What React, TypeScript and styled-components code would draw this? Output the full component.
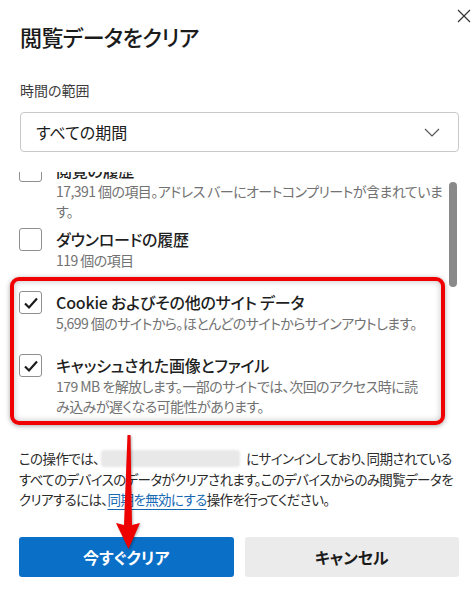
import React from 'react';
import styled, { createGlobalStyle } from 'styled-components';

const GlobalStyle = createGlobalStyle`
  html, body {
    margin: 0;
    padding: 0;
    background: #ffffff;
  }
  body {
    font-family: "Noto Sans CJK JP", "Open Sans", sans-serif;
    font-feature-settings: "palt";
    color: #1b1b1b;
  }
`;

// Dialog shell
const Dialog = styled.div`
  position: relative;
  width: 475px;
  height: 593px;
  box-sizing: border-box;
  padding: 0 16px 0 19px;
  background: #ffffff;
  overflow: hidden;
`;

const Header = styled.div`
  display: flex;
  justify-content: space-between;
  align-items: flex-start;
`;

const Title = styled.h1`
  margin: 21px 0 0 1px;
  font-size: 22px;
  line-height: 30px;
  font-weight: 500;
  letter-spacing: -0.6px;
  color: #1b1b1b;
`;

const CloseButton = styled.button`
  display: flex;
  margin: 9px -12px 0 0;
  padding: 0;
  border: none;
  background: none;
  width: 14px;
  height: 14px;
`;

const Label = styled.div`
  margin: 29px 0 0 1px;
  font-size: 14px;
  line-height: 20px;
  color: #3b3b3b;
`;

const Select = styled.div`
  display: flex;
  align-items: center;
  justify-content: space-between;
  box-sizing: border-box;
  height: 40px;
  margin: 12px 0 0 1px;
  padding: 0 18px 0 15px;
  border: 1px solid #c9c9c9;
  border-radius: 4px;
  font-size: 16px;
  color: #1b1b1b;
`;

// Scrolling list of data types
const ListArea = styled.div`
  display: flex;
  height: 253px;
  margin-top: 20px;
`;

const ListViewport = styled.div`
  flex: 1;
  overflow: hidden;
`;

const ListInner = styled.div`
  margin-top: -13px;
`;

const ScrollTrack = styled.div`
  width: 8px;
  margin: 0 2px 0 4px;
`;

const ScrollThumb = styled.div`
  margin-top: 10px;
  height: 105px;
  border-radius: 4px;
  background: #8a8a8a;
`;

const Row = styled.div<{ $tight?: boolean }>`
  display: flex;
  align-items: flex-start;
  gap: 14px;
  margin-bottom: ${p => (p.$tight ? '7px' : '21px')};
`;

const Box = styled.div`
  flex: none;
  display: flex;
  align-items: center;
  justify-content: center;
  box-sizing: border-box;
  width: 23px;
  height: 23px;
  border: 1px solid #8f8f8f;
  border-radius: 3px;
  background: #ffffff;
`;

const RowText = styled.div`
  display: flex;
  flex-direction: column;
`;

const RowTitle = styled.div`
  font-size: 16px;
  line-height: 22px;
  font-weight: 500;
  letter-spacing: -0.2px;
  color: #1f1f1f;
  white-space: nowrap;
`;

const RowSub = styled.div`
  font-size: 14px;
  line-height: 20px;
  letter-spacing: -0.55px;
  color: #727272;
  white-space: nowrap;
`;

// Sync notice
const Notice = styled.div`
  margin: 23px 0 0 0;
  font-size: 13.5px;
  line-height: 20.5px;
  letter-spacing: -0.6px;
  color: #2b2b2b;
`;

const Line = styled.div`
  white-space: nowrap;
`;

const Redacted = styled.span`
  display: inline-block;
  width: 139px;
  height: 17px;
  margin: 0 6px 0 2px;
  vertical-align: -3px;
  border-radius: 3px;
  background: #e8e8e8;
  filter: blur(1px);
`;

const SyncLink = styled.a`
  color: #1769b3;
  text-decoration: underline;
  text-decoration-color: #1769b3;
  text-underline-offset: 4px;
`;

const Buttons = styled.div`
  display: grid;
  grid-template-columns: 1fr 1fr;
  gap: 11px;
  margin-top: 27px;
`;

const Button = styled.button<{ $primary?: boolean }>`
  height: 40px;
  border: none;
  border-radius: 3px;
  font-family: inherit;
  font-feature-settings: "palt";
  font-size: 16px;
  font-weight: 700;
  background: ${p => (p.$primary ? '#0a6fc7' : '#ebebeb')};
  color: ${p => (p.$primary ? '#ffffff' : '#1b1b1b')};
`;

// Annotation overlays
const Highlight = styled.div`
  position: absolute;
  left: 10px;
  top: 277px;
  width: 435px;
  height: 148px;
  box-sizing: border-box;
  border: 4px solid #f00000;
  border-radius: 9px;
  box-shadow: 0 1px 5px rgba(0, 0, 0, 0.35), inset 0 0 6px rgba(0, 0, 0, 0.25);
  pointer-events: none;
`;

const Arrow = styled.svg`
  position: absolute;
  left: 113px;
  top: 433px;
  filter: drop-shadow(1px 1px 1px rgba(0, 0, 0, 0.3));
`;

const Check = () => (
  <svg width="18" height="18" viewBox="0 0 18 18">
    <path d="M3 9.5 L7 13.5 L15 4.5" fill="none" stroke="#1b1b1b" strokeWidth="2.2" />
  </svg>
);

const items = [
  { title: '閲覧の履歴', sub: ['17,391 個の項目。アドレス バーにオートコンプリートが含まれていま', 'す。'], checked: false, tight: true },
  { title: 'ダウンロードの履歴', sub: ['119 個の項目'], checked: false },
  { title: 'Cookie およびその他のサイト データ', sub: ['5,699 個のサイトから。ほとんどのサイトからサインアウトします。'], checked: true },
  { title: 'キャッシュされた画像とファイル', sub: ['179 MB を解放します。一部のサイトでは、次回のアクセス時に読', 'み込みが遅くなる可能性があります。'], checked: true },
];

const App = () => {
  return (
    <>
      <GlobalStyle />
      <Dialog>
        <Header>
          <Title>閲覧データをクリア</Title>
          <CloseButton aria-label="閉じる">
            <svg width="14" height="14" viewBox="0 0 14 14">
              <path d="M1 1 L13 13 M13 1 L1 13" stroke="#333" strokeWidth="1.2" />
            </svg>
          </CloseButton>
        </Header>

        <Label>時間の範囲</Label>
        <Select>
          <span>すべての期間</span>
          <svg width="16" height="9" viewBox="0 0 16 9">
            <path d="M1 1 L8 8 L15 1" fill="none" stroke="#555" strokeWidth="1.2" />
          </svg>
        </Select>

        <ListArea>
          <ListViewport>
            <ListInner>
              {items.map((item, index) =>
                <Row key={index} $tight={item.tight}>
                  <Box>{item.checked && <Check />}</Box>
                  <RowText>
                    <RowTitle>{item.title}</RowTitle>
                    {item.sub.map((line, i) => <RowSub key={i}>{line}</RowSub>)}
                  </RowText>
                </Row>
              )}
            </ListInner>
          </ListViewport>
          <ScrollTrack>
            <ScrollThumb />
          </ScrollTrack>
        </ListArea>

        <Notice>
          <Line>この操作では、<Redacted />にサインインしており、同期されている</Line>
          <Line>すべてのデバイスのデータがクリアされます。このデバイスからのみ閲覧データを</Line>
          <Line>クリアするには、<SyncLink href="#">同期を無効にする</SyncLink>操作を行ってください。</Line>
        </Notice>

        <Buttons>
          <Button $primary>今すぐクリア</Button>
          <Button>キャンセル</Button>
        </Buttons>

        <Highlight />
        <Arrow width="30" height="118" viewBox="0 0 30 118">
          <path d="M14.5 2 L17.5 2 L19 92 L27 90 L15.5 116 L3 90 L11 92 Z" fill="#ee0000" />
        </Arrow>
      </Dialog>
    </>
  );
};

export default App;
